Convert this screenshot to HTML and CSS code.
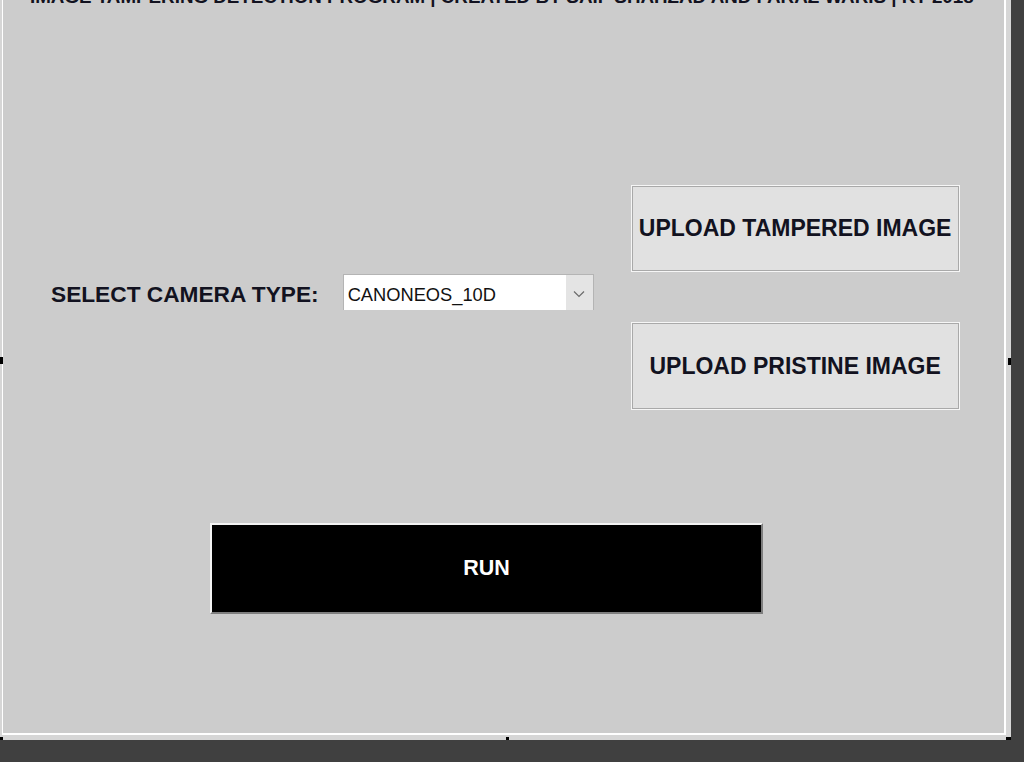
FILE: index.html
```html
<!DOCTYPE html>
<html>
<head>
<meta charset="utf-8">
<title>Image Tampering Detection</title>
<link rel="stylesheet" href="styles.css">
</head>
<body>
<div class="window">
  <div class="panel">
    <div class="title">IMAGE TAMPERING DETECTION PROGRAM | CREATED BY SAIF SHAHZAD AND FARAZ WARIS | KT 2018</div>
    <div class="main">
      <div class="camera">
        <span class="label">SELECT CAMERA TYPE:</span>
        <div class="select">
          <span class="select-value">CANONEOS_10D</span>
          <span class="select-arrow">
            <svg width="12" height="8" viewBox="0 0 12 8"><path d="M1 1.5 L6 6.5 L11 1.5" fill="none" stroke="#6b6b6b" stroke-width="1.2"/></svg>
          </span>
        </div>
      </div>
      <div class="uploads">
        <div class="btn upload">UPLOAD TAMPERED IMAGE</div>
        <div class="btn upload tall">UPLOAD PRISTINE IMAGE</div>
      </div>
    </div>
    <div class="run">RUN</div>
  </div>
  <span class="handle h-left"></span>
  <span class="handle h-right"></span>
  <span class="handle h-bl"></span>
  <span class="handle h-bm"></span>
  <span class="handle h-br"></span>
</div>
</body>
</html>
```

FILE: styles.css
```css
html, body {
  margin: 0;
  padding: 0;
}
body {
  background: #404040;
  width: 1024px;
  height: 762px;
  overflow: hidden;
  font-family: "Liberation Sans", Arial, sans-serif;
}
.window {
  position: relative;
  width: 1011px;
  height: 740px;
  background: #d6d6d6;
}
.panel {
  margin-left: 2px;
  width: 1001px;
  height: 733px;
  background: #cccccc;
  border-left: 1px solid #ffffff;
  border-right: 2px solid #ffffff;
  border-bottom: 2px solid #ffffff;
  overflow: hidden;
}
.title {
  margin-top: -13px;
  height: 19px;
  padding-left: 27px;
  font-size: 18.8px;
  line-height: 19px;
  font-weight: bold;
  color: #121220;
  white-space: nowrap;
}
.main {
  display: flex;
  align-items: flex-start;
  padding-top: 179px;
  padding-left: 48px;
}
.camera {
  display: flex;
  align-items: center;
  margin-top: 89px;
}
.label {
  font-size: 22.7px;
  line-height: 26px;
  font-weight: bold;
  color: #121220;
  margin-top: 4px;
  white-space: nowrap;
}
.select {
  display: flex;
  margin-left: 24px;
  width: 249px;
  height: 35px;
  background: #ffffff;
  border: 1px solid #b4b4b4;
  border-bottom: none;
}
.select-value {
  flex: 1;
  padding-left: 4px;
  font-size: 18.3px;
  line-height: 40px;
  color: #111111;
}
.select-arrow {
  width: 27px;
  background: #e4e4e4;
  display: flex;
  align-items: center;
  justify-content: center;
  padding-top: 3px;
}
.uploads {
  display: flex;
  flex-direction: column;
  gap: 50px;
  margin-left: 37px;
}
.btn {
  display: flex;
  align-items: center;
  justify-content: center;
  box-sizing: border-box;
}
.upload {
  width: 329px;
  height: 87px;
  background: #e1e1e1;
  border: 1px solid #f6f6f6;
  box-shadow: inset 0 0 0 1px #a9a9a9;
  font-size: 23px;
  font-weight: bold;
  color: #121220;
  white-space: nowrap;
}
.upload.tall {
  height: 88px;
}
.run {
  margin-top: 113px;
  margin-left: 207px;
  width: 553px;
  height: 91px;
  box-sizing: border-box;
  background: #000000;
  border-top: 2px solid #f4f4f4;
  border-left: 2px solid #f4f4f4;
  border-right: 2px solid #7e7e7e;
  border-bottom: 2px solid #7e7e7e;
  display: flex;
  align-items: center;
  justify-content: center;
  color: #ffffff;
  font-size: 21.5px;
  font-weight: bold;
}
.handle {
  position: absolute;
  background: #000000;
}
.h-left {
  left: 0;
  top: 357px;
  width: 3px;
  height: 7px;
}
.h-right {
  left: 1008px;
  top: 358px;
  width: 3px;
  height: 7px;
}
.h-bl {
  left: 0;
  top: 737px;
  width: 3px;
  height: 3px;
}
.h-bm {
  left: 506px;
  top: 737px;
  width: 3px;
  height: 3px;
}
.h-br {
  left: 1006px;
  top: 737px;
  width: 5px;
  height: 3px;
}
```
